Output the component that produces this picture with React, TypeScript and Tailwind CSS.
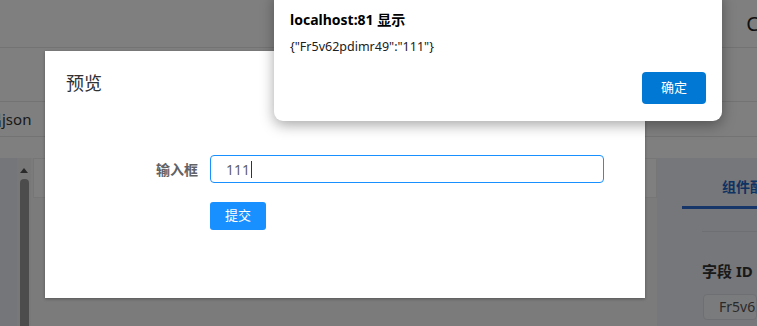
import React from 'react';

const font = { fontFamily: '"Noto Sans", "Noto Sans CJK SC", sans-serif' };

const App: React.FC = () => {
  return (
    <div className="relative w-[757px] h-[326px] overflow-hidden bg-white" style={font}>
      {/* Page behind the overlay */}
      <div className="flex flex-col h-full">
        <div className="shrink-0 h-12 border-b border-[#e6e6e6] flex items-center justify-end">
          <span className="text-[20px] text-[#222] -mr-[2px]">C</span>
        </div>
        <div className="shrink-0 h-[54px] border-b border-[#e6e6e6]" />
        <div className="shrink-0 h-[35px] border-b border-[#e6e6e6] flex items-center">
          <span className="text-[15px] text-[#333] -ml-[28px]">导出json</span>
        </div>
        <div className="shrink-0 h-[21px]" />
        <div className="flex flex-1 min-h-0">
          <div className="w-[17px] bg-[#e8ecf2]" />
          <div className="w-[14px] bg-[#f1f1f1] flex flex-col items-center pt-[10px]">
            <div className="w-0 h-0 border-l-[4px] border-r-[4px] border-b-[5px] border-l-transparent border-r-transparent border-b-[#555]" />
            <div className="mt-[6px] w-[9px] flex-1 rounded-t-[4px] bg-[#999]" />
          </div>
          <div className="flex-1 flex flex-col bg-[#f7f7f7]">
            <div className="h-[40px] ml-[2px] bg-white border border-[#ececec]" />
          </div>
          <div className="w-[100px] bg-[#eceef4] pl-[25px] pt-[18px]">
            <div className="whitespace-nowrap text-[14px] font-bold text-[#1d64c4] pl-[40px]">组件配置</div>
            <div className="mt-[9px] h-[3px] bg-[#2c6ad0]" />
            <div className="mt-[22px] ml-[20px] h-px bg-[#dcdfe6]" />
            <div className="mt-[28px] ml-[20px] whitespace-nowrap text-[15px] font-bold text-[#333]">字段 ID</div>
            <div className="mt-[11px] ml-[21px] h-[26px] rounded-[4px] border border-[#dcdfe6] bg-[#f5f7fa] pl-[15px] text-[14px] text-[#555] leading-[24px] whitespace-nowrap overflow-hidden">
              Fr5v62pdimr49
            </div>
          </div>
        </div>
      </div>

      {/* Mask */}
      <div className="absolute inset-0 bg-black/50" />

      {/* Preview modal */}
      <div className="absolute left-[45px] top-[51px] w-[600px] h-[247px] bg-white shadow-[0_1px_3px_rgba(0,0,0,0.3)]">
        <div className="pl-[21px] pt-[20px] text-[18px] leading-[24px] text-[#303133]">预览</div>
        <div className="mt-[60px] flex items-center">
          <div className="w-[165px] pr-[12px] text-right text-[14px] font-semibold text-[#606266]">输入框</div>
          <div className="w-[394px] h-[28px] rounded-[4px] border border-[#1890ff] flex items-center pl-[15px] text-[14px] text-[#606266]">
            111<span className="ml-px w-px h-[17px] bg-[#333]" />
          </div>
        </div>
        <div className="mt-[19px] pl-[165px]">
          <button className="w-[56px] h-[28px] rounded-[3px] bg-[#1890ff] text-white text-[13px]">提交</button>
        </div>
      </div>

      {/* Browser alert */}
      <div className="absolute left-[274px] -top-[10px] w-[448px] h-[131px] bg-white rounded-[9px] shadow-[0_4px_14px_rgba(0,0,0,0.35)] pl-[16px] pr-[16px] pt-[20px]">
        <div className="text-[14px] font-bold text-black leading-[20px]">localhost:81 显示</div>
        <div className="mt-[8px] text-[12.5px] text-[#202020] leading-[18px]">{'{"Fr5v62pdimr49":"111"}'}</div>
        <div className="mt-[16px] flex justify-end">
          <button className="w-[64px] h-[32px] rounded-[4px] bg-[#0078d4] text-white text-[13px]">确定</button>
        </div>
      </div>
    </div>
  );
};

export default App;
